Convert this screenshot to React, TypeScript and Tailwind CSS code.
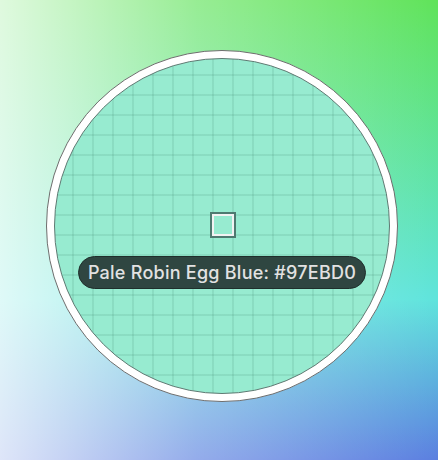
export default function App() {
  return (
    <div className="w-[438px] h-[460px] overflow-hidden pl-[46px] pt-[50px] bg-[linear-gradient(to_right,rgba(255,255,255,0.8),rgba(255,255,255,0.35)_45%,rgba(255,255,255,0)),linear-gradient(to_bottom,#60e35a,#5fe4dc_65%,#5b7fe0)]">
      <div className="w-[352px] h-[352px] rounded-full bg-white border border-[#6e6e6e] p-[7px]">
        <div className="relative w-full h-full rounded-full border border-[#5f7a73] overflow-hidden bg-[#97EBD0] bg-[linear-gradient(to_right,rgba(60,130,105,0.14)_2px,transparent_2px),linear-gradient(to_bottom,rgba(60,130,105,0.14)_2px,transparent_2px)] bg-[length:20px_20px] bg-[position:17px_15px]">
          <div className="absolute left-[155px] top-[153px] w-[26px] h-[26px] border-2 border-[#4e7a70]">
            <div className="w-full h-full border-2 border-[#f2f2f2]" />
          </div>
          <div className="absolute left-[23px] top-[197px] w-[288px] h-[33px] rounded-full bg-[#2f4641] border border-[#1f2f2b] flex items-center justify-center">
            <span className="text-[18px] font-medium tracking-[0.25px] text-[#e2e2e2] font-['Inter',sans-serif] whitespace-nowrap">Pale Robin Egg Blue: #97EBD0</span>
          </div>
        </div>
      </div>
    </div>
  );
}
